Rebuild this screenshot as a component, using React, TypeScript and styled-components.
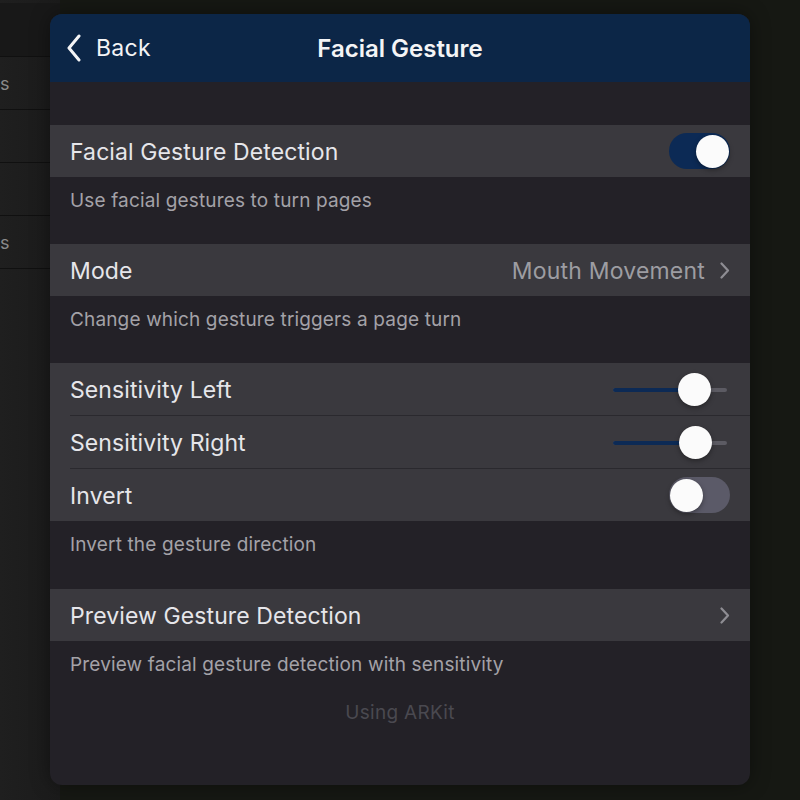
import React from "react";
import styled, { createGlobalStyle } from "styled-components";

const Global = createGlobalStyle`
  html, body { margin: 0; padding: 0; background: #161813; }
  body { font-family: Inter, "Noto Sans", sans-serif; -webkit-font-smoothing: antialiased; }
  * { box-sizing: border-box; }
`;

const Screen = styled.div`
  width: 800px;
  height: 800px;
  position: relative;
  overflow: hidden;
  background: #161813;
  display: flex;
`;

const SideList = styled.div`
  width: 60px;
  height: 100%;
  background: linear-gradient(90deg, #1f1f1f 0%, #1b1b1b 100%);
  display: flex;
  flex-direction: column;
  padding-top: 3px;
`;

const SideTop = styled.div`
  height: 53px;
  background: #181818;
`;

const SideRow = styled.div`
  height: 53px;
  border-top: 1px solid #101010;
  color: #8a8a8a;
  font-size: 18px;
  display: flex;
  align-items: center;
  overflow: hidden;
  white-space: nowrap;
`;

const Sheet = styled.div`
  position: absolute;
  left: 50px;
  top: 14px;
  width: 700px;
  height: 771px;
  border-radius: 12px;
  overflow: hidden;
  background: #232127;
  display: flex;
  flex-direction: column;
  box-shadow: 0 0 20px rgba(0, 0, 0, 0.4);
`;

const Header = styled.div`
  height: 68px;
  flex: none;
  background: #0c2647;
  display: grid;
  grid-template-columns: 1fr auto 1fr;
  align-items: center;
  color: #f4f4f6;
`;

const BackButton = styled.div`
  display: flex;
  align-items: center;
  gap: 14px;
  padding-left: 16px;
  font-size: 23px;
  letter-spacing: 0.3px;
`;

const Title = styled.div`
  font-size: 24px;
  font-weight: 600;
  letter-spacing: 0px;
`;

const Body = styled.div`
  display: flex;
  flex-direction: column;
  padding-top: 43px;
`;

const Group = styled.div`
  background: #3a393e;
  display: flex;
  flex-direction: column;
`;

const Row = styled.div<{ $sep?: boolean }>`
  height: ${(p) => (p.$sep ? 53 : 52)}px;
  display: flex;
  align-items: center;
  justify-content: space-between;
  padding: 0 20px 0 20px;
  position: relative;
  ${(p) =>
    p.$sep
      ? `&::after { content: ""; position: absolute; left: 20px; right: 0; bottom: 0; height: 1px; background: #2a292e; }`
      : ""}
`;

const Label = styled.div`
  color: #e6e6ea;
  font-size: 23px;
  letter-spacing: 0.1px;
  padding-top: 1px;
`;

const Value = styled.div`
  display: flex;
  align-items: center;
  gap: 15px;
  color: #9d9da2;
  font-size: 23px;
  letter-spacing: 0.2px;
  padding-top: 1px;
`;

const Footer = styled.div<{ $h: number }>`
  height: ${(p) => p.$h}px;
  padding: 12px 20px 0 20px;
  color: #a3a2a8;
  font-size: 19px;
  letter-spacing: 0.15px;
`;

const Note = styled.div`
  text-align: center;
  color: #4a4950;
  font-size: 19px;
  letter-spacing: 0.3px;
  margin-top: 2px;
`;

const Track = styled.div<{ $on: boolean }>`
  width: 61px;
  height: 36px;
  border-radius: 18px;
  background: ${(p) => (p.$on ? "#0c2a55" : "#5b5a68")};
  display: flex;
  align-items: center;
  justify-content: ${(p) => (p.$on ? "flex-end" : "flex-start")};
  padding: 0 1px;
`;

const Knob = styled.div`
  width: 33px;
  height: 33px;
  border-radius: 50%;
  background: #fbfbfb;
  box-shadow: 0 2px 5px rgba(0, 0, 0, 0.35);
`;

const SliderBox = styled.div`
  width: 114px;
  height: 34px;
  position: relative;
  margin-right: 3px;
`;

const SliderRail = styled.div`
  position: absolute;
  left: 0;
  right: 0;
  top: 50%;
  height: 4px;
  margin-top: -2px;
  border-radius: 2px;
  background: #5c5b63;
`;

const SliderFill = styled.div`
  position: absolute;
  left: 0;
  top: 50%;
  height: 4px;
  margin-top: -2px;
  border-radius: 2px;
  background: #0c2a55;
`;

const SliderKnob = styled(Knob)`
  position: absolute;
  top: 0;
  margin-left: -16px;
`;

const Chevron = ({ color }: { color: string }) => (
  <svg width="10" height="17" viewBox="0 0 10 17" fill="none">
    <path d="M1.5 1.5 L8 8.5 L1.5 15.5" stroke={color} strokeWidth="2.2" strokeLinecap="round" strokeLinejoin="round" />
  </svg>
);

const Toggle = ({ on }: { on: boolean }) => (
  <Track $on={on}>
    <Knob />
  </Track>
);

const Slider = ({ value }: { value: number }) => (
  <SliderBox>
    <SliderRail />
    <SliderFill style={{ width: `${value}%` }} />
    <SliderKnob style={{ left: `${value}%` }} />
  </SliderBox>
);

export default function App() {
  return (
    <>
      <Global />
      <Screen>
        <SideList>
          <SideTop />
          <SideRow>s</SideRow>
          <SideRow />
          <SideRow />
          <SideRow>s</SideRow>
          <SideRow />
        </SideList>
        <Sheet>
          <Header>
            <BackButton>
              <svg width="16" height="28" viewBox="0 0 16 28" fill="none">
                <path d="M13 2 L3 14 L13 26" stroke="#f4f4f6" strokeWidth="3" strokeLinecap="round" strokeLinejoin="round" />
              </svg>
              Back
            </BackButton>
            <Title>Facial Gesture</Title>
            <div />
          </Header>
          <Body>
            <Group>
              <Row>
                <Label>Facial Gesture Detection</Label>
                <Toggle on />
              </Row>
            </Group>
            <Footer $h={67}>Use facial gestures to turn pages</Footer>
            <Group>
              <Row>
                <Label>Mode</Label>
                <Value>
                  Mouth Movement
                  <Chevron color="#8e8d93" />
                </Value>
              </Row>
            </Group>
            <Footer $h={67}>Change which gesture triggers a page turn</Footer>
            <Group>
              <Row $sep>
                <Label>Sensitivity Left</Label>
                <Slider value={71} />
              </Row>
              <Row $sep>
                <Label>Sensitivity Right</Label>
                <Slider value={72} />
              </Row>
              <Row>
                <Label>Invert</Label>
                <Toggle on={false} />
              </Row>
            </Group>
            <Footer $h={68}>Invert the gesture direction</Footer>
            <Group>
              <Row>
                <Label>Preview Gesture Detection</Label>
                <Chevron color="#8e8d93" />
              </Row>
            </Group>
            <Footer $h={58}>Preview facial gesture detection with sensitivity</Footer>
            <Note>Using ARKit</Note>
          </Body>
        </Sheet>
      </Screen>
    </>
  );
}
